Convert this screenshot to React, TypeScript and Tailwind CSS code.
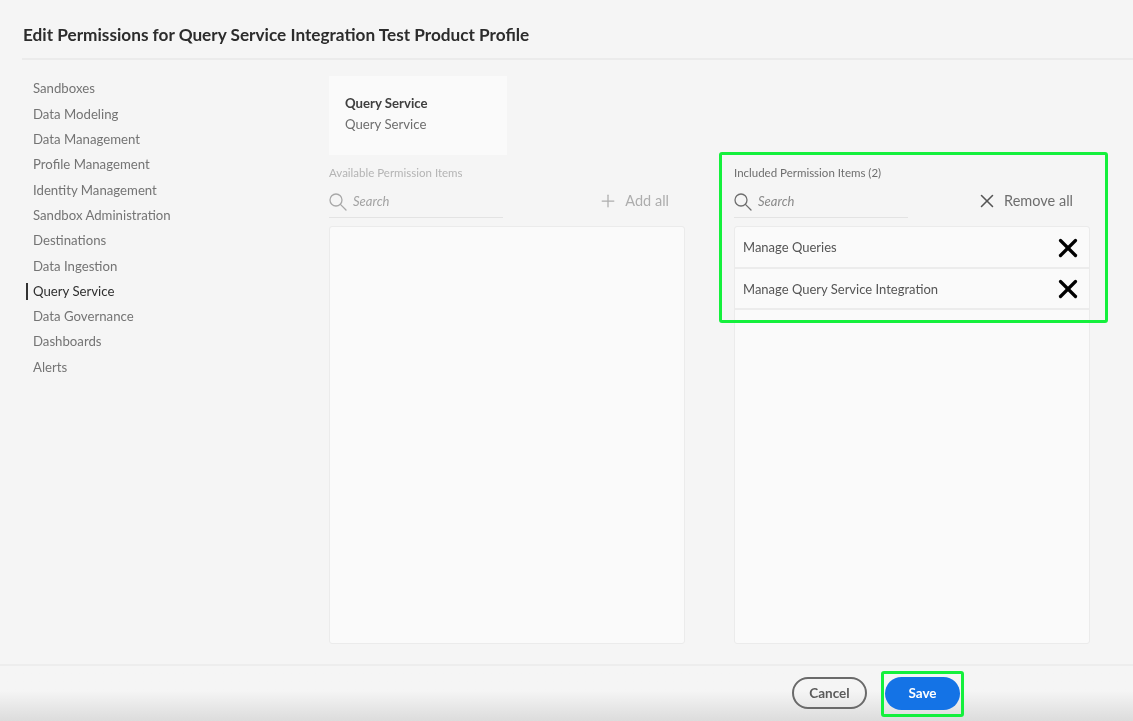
import { Plus, X } from "lucide-react";

const sections = [
  "Sandboxes",
  "Data Modeling",
  "Data Management",
  "Profile Management",
  "Identity Management",
  "Sandbox Administration",
  "Destinations",
  "Data Ingestion",
  "Query Service",
  "Data Governance",
  "Dashboards",
  "Alerts",
];

const included = ["Manage Queries", "Manage Query Service Integration"];

function SearchBox({ muted }: { muted?: boolean }) {
  return (
    <div className="flex h-[34px] w-[174px] items-center gap-[6px] border-b border-[#e3e3e3] pt-[2px]">
      <svg
        width="18"
        height="18"
        viewBox="0 0 18 18"
        fill="none"
        stroke="currentColor"
        strokeWidth="1.3"
        strokeLinecap="round"
        className={muted ? "text-[#a8a8a8]" : "text-[#6e6e6e]"}
      >
        <circle cx="7" cy="7" r="6" />
        <path d="M11.4 11.4L17 17" />
      </svg>
      <span className={`text-[13px] italic ${muted ? "text-[#a3a3a3]" : "text-[#8a8a8a]"}`}>Search</span>
    </div>
  );
}

export default function App() {
  return (
    <div className="flex h-[721px] w-[1133px] flex-col overflow-hidden bg-[#f5f5f5] blur-[0.4px] font-['Lato','Liberation_Sans',sans-serif]">
      {/* Header */}
      <div className="pl-[22px]">
        <div className="flex h-[60px] items-center border-b-2 border-[#ebebeb] pl-[1px] pt-[12px]">
          <h1 className="text-[17.2px] font-bold text-[#2c2c2c]">Edit Permissions for Query Service Integration Test Product Profile</h1>
        </div>
      </div>

      <div className="flex min-h-0 flex-1">
        {/* Sections */}
        <nav className="w-[329px] pl-[26px] pt-[16.7px]">
          {sections.map((name) => (
            <div
              key={name}
              className={`flex h-[25.3px] items-center text-[13.2px] ${
                name === "Query Service" ? "text-[#2f2f2f]" : "text-[#747474]"
              }`}
            >
              <span className={`mr-[5px] h-[17px] w-[2px] ${name === "Query Service" ? "bg-[#333333]" : ""}`} />
              {name}
            </div>
          ))}
        </nav>

        <div className="flex w-[761px] flex-col pt-[16px]">
          {/* Product card */}
          <div className="flex h-[79px] w-[178px] flex-col bg-[#fafafa] pl-[16px] pt-[17px]">
            <span className="text-[13.2px] font-bold leading-[20px] text-[#404040]">Query Service</span>
            <span className="mt-[1px] text-[13.2px] leading-[20px] text-[#6e6e6e]">Query Service</span>
          </div>

          <div className="mt-[9px] flex h-[480px] gap-[49px]">
            {/* Available */}
            <div className="flex w-[356px] flex-col">
              <div className="flex h-[17px] items-center text-[11.5px] text-[#b4b4b4]">Available Permission Items</div>
              <div className="mt-[3px] flex items-start justify-between">
                <SearchBox muted />
                <div className="mr-[16px] flex h-[34px] items-center gap-[7px] text-[14.5px] text-[#adadad]">
                  <Plus size={20} strokeWidth={1.5} />
                  Add all
                </div>
              </div>
              <div className="mt-[8px] flex-1 rounded-[3px] border border-[#ebebeb] bg-[#fafafa]" />
            </div>

            {/* Included */}
            <div className="relative flex w-[356px] flex-col">
              <div className="flex h-[17px] items-center text-[11.5px] text-[#6e6e6e]">Included Permission Items (2)</div>
              <div className="mt-[3px] flex items-start justify-between">
                <SearchBox />
                <div className="mr-[17px] flex h-[34px] items-center gap-[6px] text-[14.5px] text-[#6e6e6e]">
                  <X size={22} strokeWidth={1.7} className="text-[#555555]" />
                  Remove all
                </div>
              </div>
              <div className="mt-[8px] flex-1 rounded-[3px] border border-[#ebebeb] bg-[#fafafa]">
                {included.map((name) => (
                  <div
                    key={name}
                    className="flex h-[41.5px] items-center justify-between border-b-2 border-[#ececec] pl-[8px] pr-[6px] pt-[2px] text-[13px] text-[#555555]"
                  >
                    {name}
                    <X size={30} strokeWidth={2.6} className="text-black" />
                  </div>
                ))}
              </div>
              <div className="absolute left-[-15px] top-[-12px] h-[171px] w-[389px] rounded-[3px] border-[3px] border-[#14f03c]" />
            </div>
          </div>
        </div>
      </div>

      {/* Footer */}
      <div className="flex h-[57px] items-start justify-end border-t-2 border-[#ededed] bg-gradient-to-b from-[#f5f5f5] from-45% to-[#dcdcdc] pr-[173px] pt-[11px]">
        <button className="h-[32px] w-[75px] rounded-full border-2 border-[#6a6a6a] text-[13.5px] font-bold text-[#5a5a5a]">Cancel</button>
        <div className="relative ml-[18px]">
          <button className="block h-[33px] w-[75px] rounded-full bg-[#1473e6] text-[13.5px] font-bold text-white">Save</button>
          <div className="absolute left-[-4px] top-[-6px] h-[46px] w-[83px] rounded-[3px] border-[3px] border-[#14f03c]" />
        </div>
      </div>
    </div>
  );
}
